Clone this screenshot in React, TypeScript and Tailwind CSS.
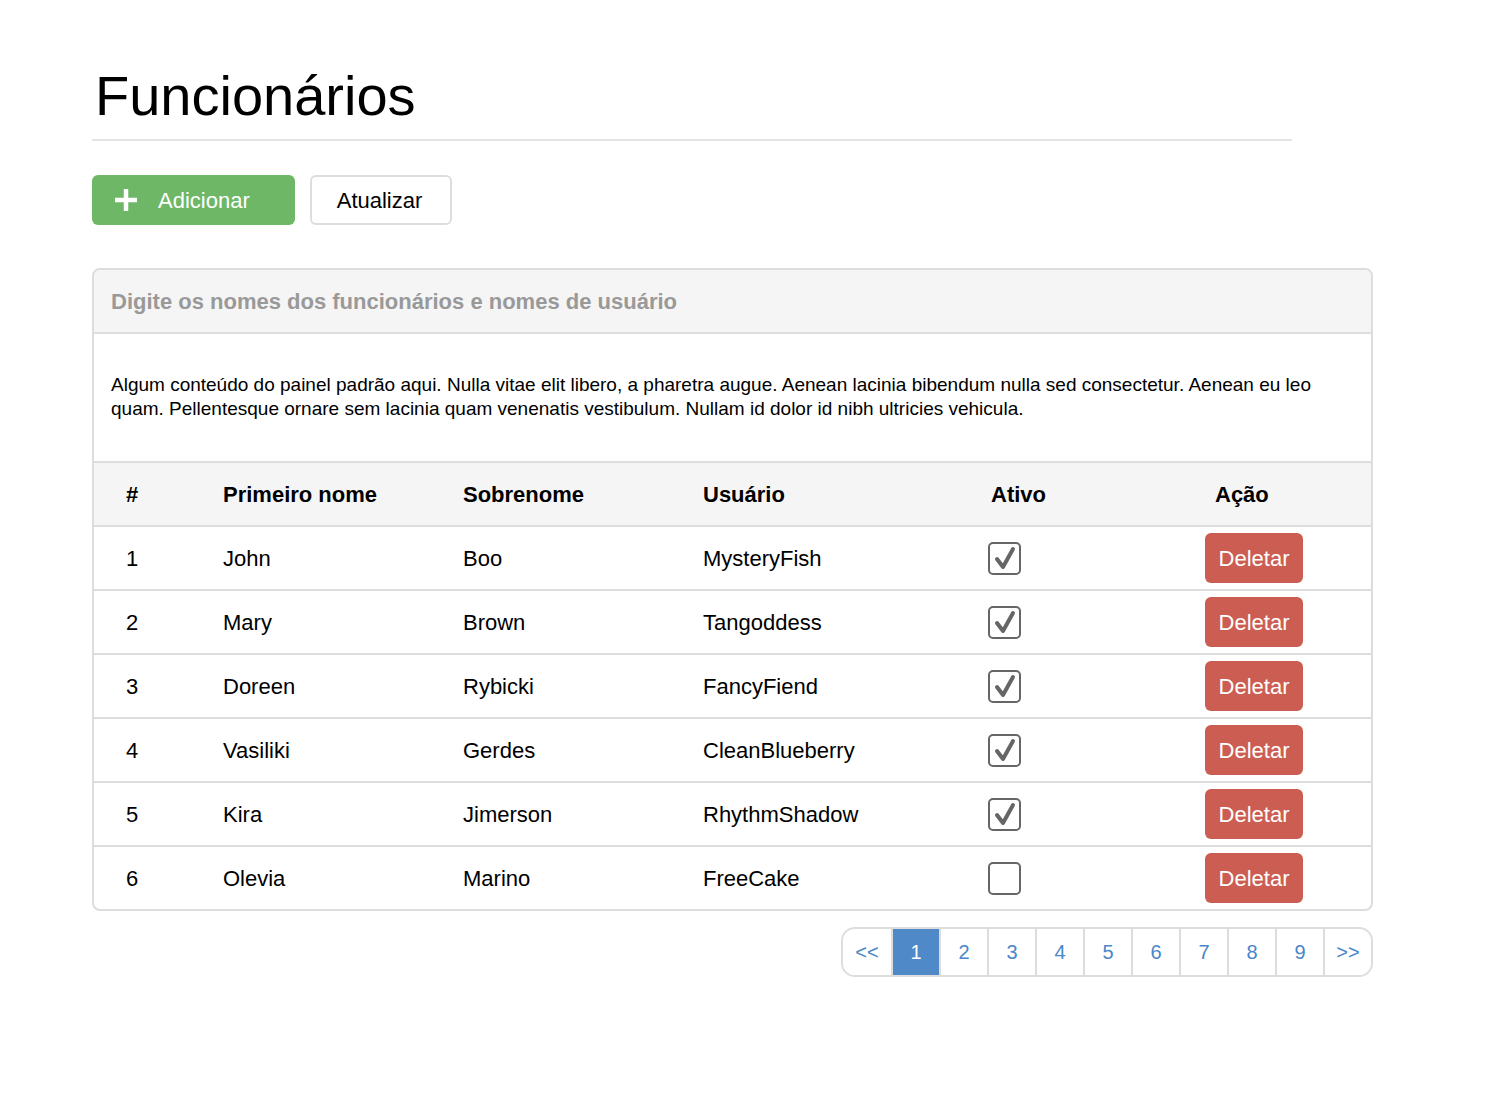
import React from "react";

type Employee = {
  id: number;
  first: string;
  last: string;
  user: string;
  active: boolean;
};

const employees: Employee[] = [
  { id: 1, first: "John", last: "Boo", user: "MysteryFish", active: true },
  { id: 2, first: "Mary", last: "Brown", user: "Tangoddess", active: true },
  { id: 3, first: "Doreen", last: "Rybicki", user: "FancyFiend", active: true },
  { id: 4, first: "Vasiliki", last: "Gerdes", user: "CleanBlueberry", active: true },
  { id: 5, first: "Kira", last: "Jimerson", user: "RhythmShadow", active: true },
  { id: 6, first: "Olevia", last: "Marino", user: "FreeCake", active: false },
];

const pages = ["<<", "1", "2", "3", "4", "5", "6", "7", "8", "9", ">>"];

const cols = "grid grid-cols-[97px_240px_240px_288px_224px_1fr]";

const CheckBox = ({ checked }: { checked: boolean }) => (
  <div className="w-[33px] h-[33px] rounded-[5px] border-2 border-[#666] bg-white flex items-center justify-center">
    {checked && (
      <svg width="22" height="24" viewBox="0 0 22 24">
        <path
          d="M3 13 L9 21 L19 3"
          fill="none"
          stroke="#666"
          strokeWidth="4"
          strokeLinecap="round"
          strokeLinejoin="round"
        />
      </svg>
    )}
  </div>
);

export default function App() {
  return (
    <div className="min-h-screen bg-white font-['Liberation_Sans',Arial,sans-serif] text-black">
      <div className="pl-[92px] pt-[68px] w-[1373px]">
        {/* Title */}
        <div className="w-[1200px] border-b-2 border-[#e3e3e3] pb-[15px]">
          <h1 className="pl-[3px] text-[56px] leading-[56px] font-normal">Funcionários</h1>
        </div>

        {/* Buttons */}
        <div className="flex gap-[15px] mt-[34px]">
          <button className="flex items-center w-[203px] h-[50px] rounded-[6px] bg-[#6db766] text-white text-[22px] pl-[22px]">
            <svg width="24" height="24" viewBox="0 0 24 24" className="mr-[20px]">
              <path d="M12 1 V23 M1 12 H23" stroke="white" strokeWidth="4.5" />
            </svg>
            Adicionar
          </button>
          <button className="w-[142px] h-[50px] rounded-[6px] border-2 border-[#ddd] bg-white text-[22px] pr-[3px]">
            Atualizar
          </button>
        </div>

        {/* Panel */}
        <div className="mt-[43px] border-2 border-[#ddd] rounded-[8px] overflow-hidden">
          <div className="h-[64px] bg-[#f5f5f5] border-b-2 border-[#ddd] flex items-center px-[17px]">
            <span className="text-[22px] font-bold text-[#999]">
              Digite os nomes dos funcionários e nomes de usuário
            </span>
          </div>
          <div className="px-[17px] pt-[39px] pb-[40px] text-[19px] leading-[24px]">
            Algum conteúdo do painel padrão aqui. Nulla vitae elit libero, a pharetra augue. Aenean lacinia
            bibendum nulla sed consectetur. Aenean eu leo quam. Pellentesque ornare sem lacinia quam venenatis
            vestibulum. Nullam id dolor id nibh ultricies vehicula.
          </div>

          {/* Table */}
          <div className={`${cols} h-16 items-center border-t-2 border-[#ddd] bg-[#f5f5f5] text-[22px] font-bold`}>
            <div className="pl-8">#</div>
            <div className="pl-8">Primeiro nome</div>
            <div className="pl-8">Sobrenome</div>
            <div className="pl-8">Usuário</div>
            <div className="pl-8">Ativo</div>
            <div className="pl-8">Ação</div>
          </div>
          {employees.map((e) => (
            <div key={e.id} className={`${cols} h-16 items-center border-t-2 border-[#ddd] text-[22px]`}>
              <div className="pl-8">{e.id}</div>
              <div className="pl-8">{e.first}</div>
              <div className="pl-8">{e.last}</div>
              <div className="pl-8">{e.user}</div>
              <div className="pl-[29px]">
                <CheckBox checked={e.active} />
              </div>
              <div className="pl-[22px]">
                <button className="w-[98px] h-[50px] rounded-[6px] bg-[#cc5d52] text-white text-[22px]">
                  Deletar
                </button>
              </div>
            </div>
          ))}
        </div>

        {/* Pagination */}
        <div className="flex justify-end mt-[16px]">
          <div className="flex h-[50px] border-2 border-[#ddd] rounded-[14px] overflow-hidden">
            {pages.map((p, i) => (
              <div
                key={p}
                className={
                  "w-[48px] flex items-center justify-center text-[20px] " +
                  (i > 0 ? "border-l-2 border-[#ddd] " : "") +
                  (p === "1" ? "bg-[#4f89c8] text-white border-[#4f89c8]" : "bg-white text-[#4a86c8]")
                }
              >
                {p}
              </div>
            ))}
          </div>
        </div>
      </div>
    </div>
  );
}
